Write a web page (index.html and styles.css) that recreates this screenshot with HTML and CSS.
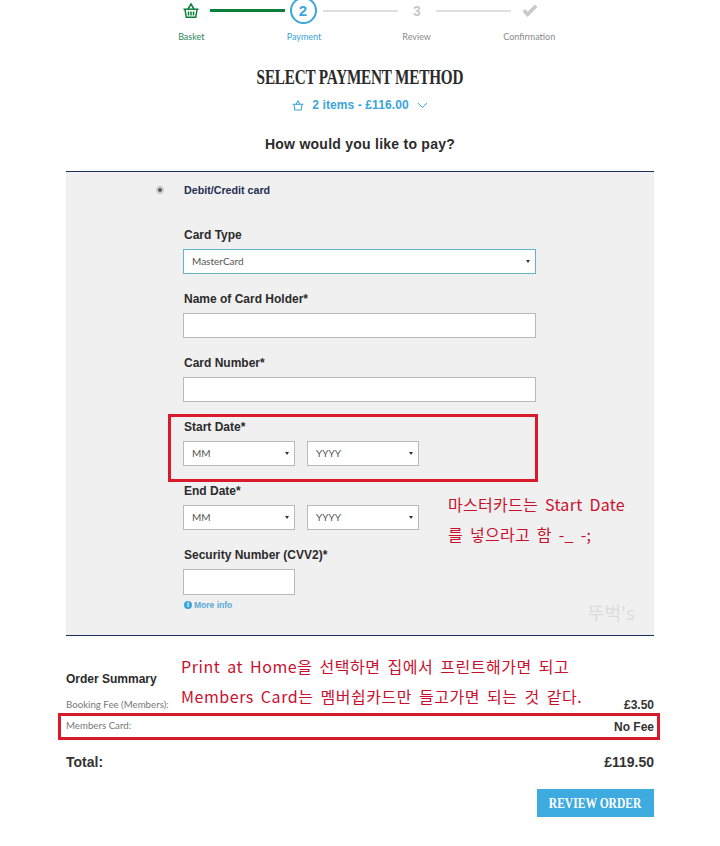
FILE: index.html
```html
<!DOCTYPE html>
<html lang="en">
<head>
<meta charset="utf-8">
<title>Select payment method</title>
<link rel="stylesheet" href="styles.css">
</head>
<body>
<main class="page">
  <div class="stepper">
    <div class="step-icons">
      <span class="icon-slot">
        <svg class="basket" width="18" height="18" viewBox="0 0 18 18" fill="none" stroke="#0b7f3a" stroke-width="1.5"><path d="M6 7 9 2l3 5"/><path d="M1.500 7.200h15"/><path d="M3 7.500l1.300 7.800h9.400L15 7.500"/><path d="M6.500 9.500v4M9 9.500v4M11.500 9.500v4"/></svg>
      </span>
      <span class="line line-done"></span>
      <span class="icon-slot"><span class="current">2</span></span>
      <span class="line"></span>
      <span class="icon-slot todo-num">3</span>
      <span class="line"></span>
      <span class="icon-slot">
        <svg width="16" height="14" viewBox="0 0 16 14" fill="#c9c9c9"><path d="M0.500 7.500 3 5l2.600 2.700L12.800 0.500 15.500 3 5.600 13z"/></svg>
      </span>
    </div>
    <div class="step-labels">
      <span class="label-done">Basket</span>
      <span class="label-current">Payment</span>
      <span>Review</span>
      <span>Confirmation</span>
    </div>
  </div>

  <h1 class="title"><span class="title-text">SELECT PAYMENT METHOD</span></h1>
  <div class="cart-line">
    <svg width="12" height="11" viewBox="0 0 18 16" fill="none" stroke="#3aa5dc" stroke-width="1.6"><path d="M6 6 9 1l3 5"/><path d="M1 6.200h16"/><path d="M3 6.500l1.300 8.300h9.400L15 6.500"/></svg>
    <span class="cart-text">2 items - £116.00</span>
    <svg width="11" height="7" viewBox="0 0 11 7" fill="none" stroke="#3aa5dc"><path d="M1 1l4.500 4.500L10 1"/></svg>
  </div>
  <h2 class="question">How would you like to pay?</h2>

  <section class="panel">
    <div class="option">
      <span class="radio"><span class="radio-dot"></span></span>
      <span class="option-name">Debit/Credit card</span>
    </div>
    <div class="form">
      <div class="field">
        <div class="field-label">Card Type</div>
        <div class="control control-wide control-focus"><span>MasterCard</span><i class="arrow"></i></div>
      </div>
      <div class="field">
        <div class="field-label">Name of Card Holder*</div>
        <div class="control control-wide"></div>
      </div>
      <div class="field">
        <div class="field-label">Card Number*</div>
        <div class="control control-wide"></div>
      </div>
      <div class="field">
        <div class="field-label">Start Date*</div>
        <div class="date-row">
          <div class="control control-short"><span>MM</span><i class="arrow"></i></div>
          <div class="control control-short"><span>YYYY</span><i class="arrow"></i></div>
        </div>
      </div>
      <div class="field">
        <div class="field-label">End Date*</div>
        <div class="date-row">
          <div class="control control-short"><span>MM</span><i class="arrow"></i></div>
          <div class="control control-short"><span>YYYY</span><i class="arrow"></i></div>
        </div>
      </div>
      <div class="field field-last">
        <div class="field-label">Security Number (CVV2)*</div>
        <div class="control control-short control-tall"></div>
      </div>
      <div class="more-info"><span class="info-dot">i</span>More info</div>
    </div>
  </section>

  <section class="summary">
    <h3 class="summary-title">Order Summary</h3>
    <div class="summary-row row-fee"><span class="row-name">Booking Fee (Members):</span><span class="row-value value-fee">£3.50</span></div>
    <div class="summary-row row-card"><span class="row-name">Members Card:</span><span class="row-value value-card">No Fee</span></div>
    <div class="summary-row row-total"><span>Total:</span><span>£119.50</span></div>
    <div class="actions"><button class="review" type="button"><span class="review-text">REVIEW ORDER</span></button></div>
  </section>

  <div class="mark mark-date"></div>
  <div class="mark mark-card"></div>
  <p class="note note-date">마스터카드는 Start Date<br>를 넣으라고 함 -_ -;</p>
  <p class="note note-print">Print at Home을 선택하면 집에서 프린트해가면 되고<br>Members Card는 멤버쉽카드만 들고가면 되는 것 같다.</p>
  <div class="watermark">뚜벅's</div>
</main>
</body>
</html>
```

FILE: styles.css
```css
* { box-sizing: border-box; }
html, body { margin: 0; padding: 0; background: #fff; }
body { font-family: "Liberation Sans", Arial, sans-serif; color: #2b2b2b; }
.page { position: relative; width: 720px; height: 846px; overflow: hidden; }

/* stepper */
.stepper { margin-top: -3px; padding-left: 135px; }
.step-icons { display: flex; align-items: center; height: 27px; padding-left: 37px; }
.icon-slot { width: 38px; height: 27px; display: flex; align-items: center; justify-content: center; flex: none; }
.line { width: 75px; height: 2px; background: #e0e0e0; flex: none; }
.line-done { height: 3px; background: #0b7f3a; }
.current { width: 27px; height: 27px; margin-right: 2px; border: 2px solid #3aa5dc; border-radius: 50%; display: flex; align-items: center; justify-content: center; color: #3aa5dc; font-size: 15px; font-weight: bold; }
.todo-num { color: #c9c9c9; font-size: 14px; font-weight: bold; }
.step-labels { display: grid; grid-template-columns: repeat(4, 112.67px); margin-top: 7px; font-family: Lato, sans-serif; font-size: 9px; line-height: 12px; color: #8a8a8a; text-align: center; }
.label-done { color: #2d8a5a; }
.label-current { color: #3aa5dc; }

/* headings */
.title { margin: 22px 0 0; font-family: "Liberation Serif", serif; font-size: 20px; line-height: 24px; font-weight: bold; color: #2a2a2a; text-align: center; }
.title-text { display: inline-block; transform: scaleX(0.76); letter-spacing: -0.25px; }
.cart-line { display: flex; justify-content: center; align-items: center; gap: 8px; height: 16px; margin-top: 8px; color: #3aa5dc; }
.cart-text { font-size: 12px; font-weight: bold; letter-spacing: 0.1px; }
.question { margin: 23px 0 0; height: 16px; font-size: 14px; line-height: 16px; font-weight: bold; color: #2b2b2b; text-align: center; letter-spacing: 0.25px; }

/* panel */
.panel { margin: 19px 66px 0; height: 465px; background: #f0f0f0; border-top: 1px solid #1a3060; border-bottom: 1px solid #1a3060; }
.option { display: flex; align-items: center; height: 14px; margin-top: 11px; padding-left: 90px; }
.radio { width: 8px; height: 8px; border-radius: 50%; background: #dcdcdc; border: 1px solid #bdbdbd; display: flex; align-items: center; justify-content: center; }
.radio-dot { width: 4px; height: 4px; border-radius: 50%; background: #555; }
.option-name { margin-left: 20px; font-size: 10.700px; line-height: 14px; font-weight: bold; color: #1f2f52; }
.form { margin-top: 30px; padding-left: 117px; }
.field { margin-bottom: 17px; }
.field-last { margin-bottom: 0; }
.field-label { height: 16px; padding-left: 1px; font-size: 12px; line-height: 16px; font-weight: bold; color: #2b2b2b; margin-bottom: 6px; }
.control { position: relative; height: 25px; background: #fff; border: 1px solid #b9b9b9; display: flex; align-items: center; padding: 0 0 2px 8px; font-family: Lato, sans-serif; font-size: 10px; color: #555; }
.control-wide { width: 353px; }
.control-short { width: 112px; }
.control-tall { height: 26px; }
.control-focus { border-color: #62b4c9; }
.arrow { position: absolute; right: 5px; top: 10px; width: 0; height: 0; border-left: 2px solid transparent; border-right: 2px solid transparent; border-top: 3px solid #333; }
.date-row { display: flex; gap: 12px; }
.more-info { display: flex; align-items: center; gap: 2px; margin-top: 4px; padding-left: 1px; height: 12px; font-size: 8.500px; font-weight: bold; color: #5aa9d6; }
.info-dot { width: 8px; height: 8px; border-radius: 50%; background: #3aa5dc; color: #fff; font-size: 7px; line-height: 8px; text-align: center; }

/* summary */
.summary { margin: 36px 66px 0; }
.summary-title { margin: 0; font-size: 12px; line-height: 14px; font-weight: bold; color: #2b2b2b; }
.summary-row { display: flex; justify-content: space-between; align-items: flex-start; }
.row-name { font-family: Lato, sans-serif; font-size: 9.700px; line-height: 16px; color: #777; }
.row-value { font-size: 12px; line-height: 16px; font-weight: bold; color: #333; }
.value-fee { margin-top: 1px; }
.value-card { margin-top: 2px; }
.row-fee { height: 16px; margin-top: 10px; }
.row-card { height: 16px; margin-top: 5px; }
.row-total { height: 18px; margin-top: 20px; font-size: 14px; line-height: 18px; font-weight: bold; color: #333; }
.actions { display: flex; justify-content: flex-end; margin-top: 18px; }
.review { display: flex; align-items: center; justify-content: center; width: 117px; height: 28px; padding: 0; border: 0; background: #3dabdf; color: #fff; font-family: "Liberation Serif", serif; font-size: 15px; font-weight: bold; white-space: nowrap; }
.review-text { display: inline-block; flex: none; transform: scaleX(0.77); }

/* annotations over the screenshot */
.mark { position: absolute; border: 3px solid #d81a2c; }
.mark-date { left: 168px; top: 414px; width: 370px; height: 68px; }
.mark-card { left: 58px; top: 713px; width: 602px; height: 27px; }
.note { position: absolute; margin: 0; font-family: "Noto Sans CJK KR", sans-serif; font-size: 16px; line-height: 30px; letter-spacing: 0.55px; word-spacing: 2.800px; color: #c8102e; white-space: nowrap; }
.note-date { left: 448px; top: 489px; letter-spacing: 0.3px; word-spacing: 3px; }
.note-print { left: 181px; top: 651px; }
.watermark { position: absolute; left: 588px; top: 598px; font-family: "Noto Sans CJK KR", sans-serif; font-size: 18px; line-height: 28px; color: #dcdcdc; }
```
